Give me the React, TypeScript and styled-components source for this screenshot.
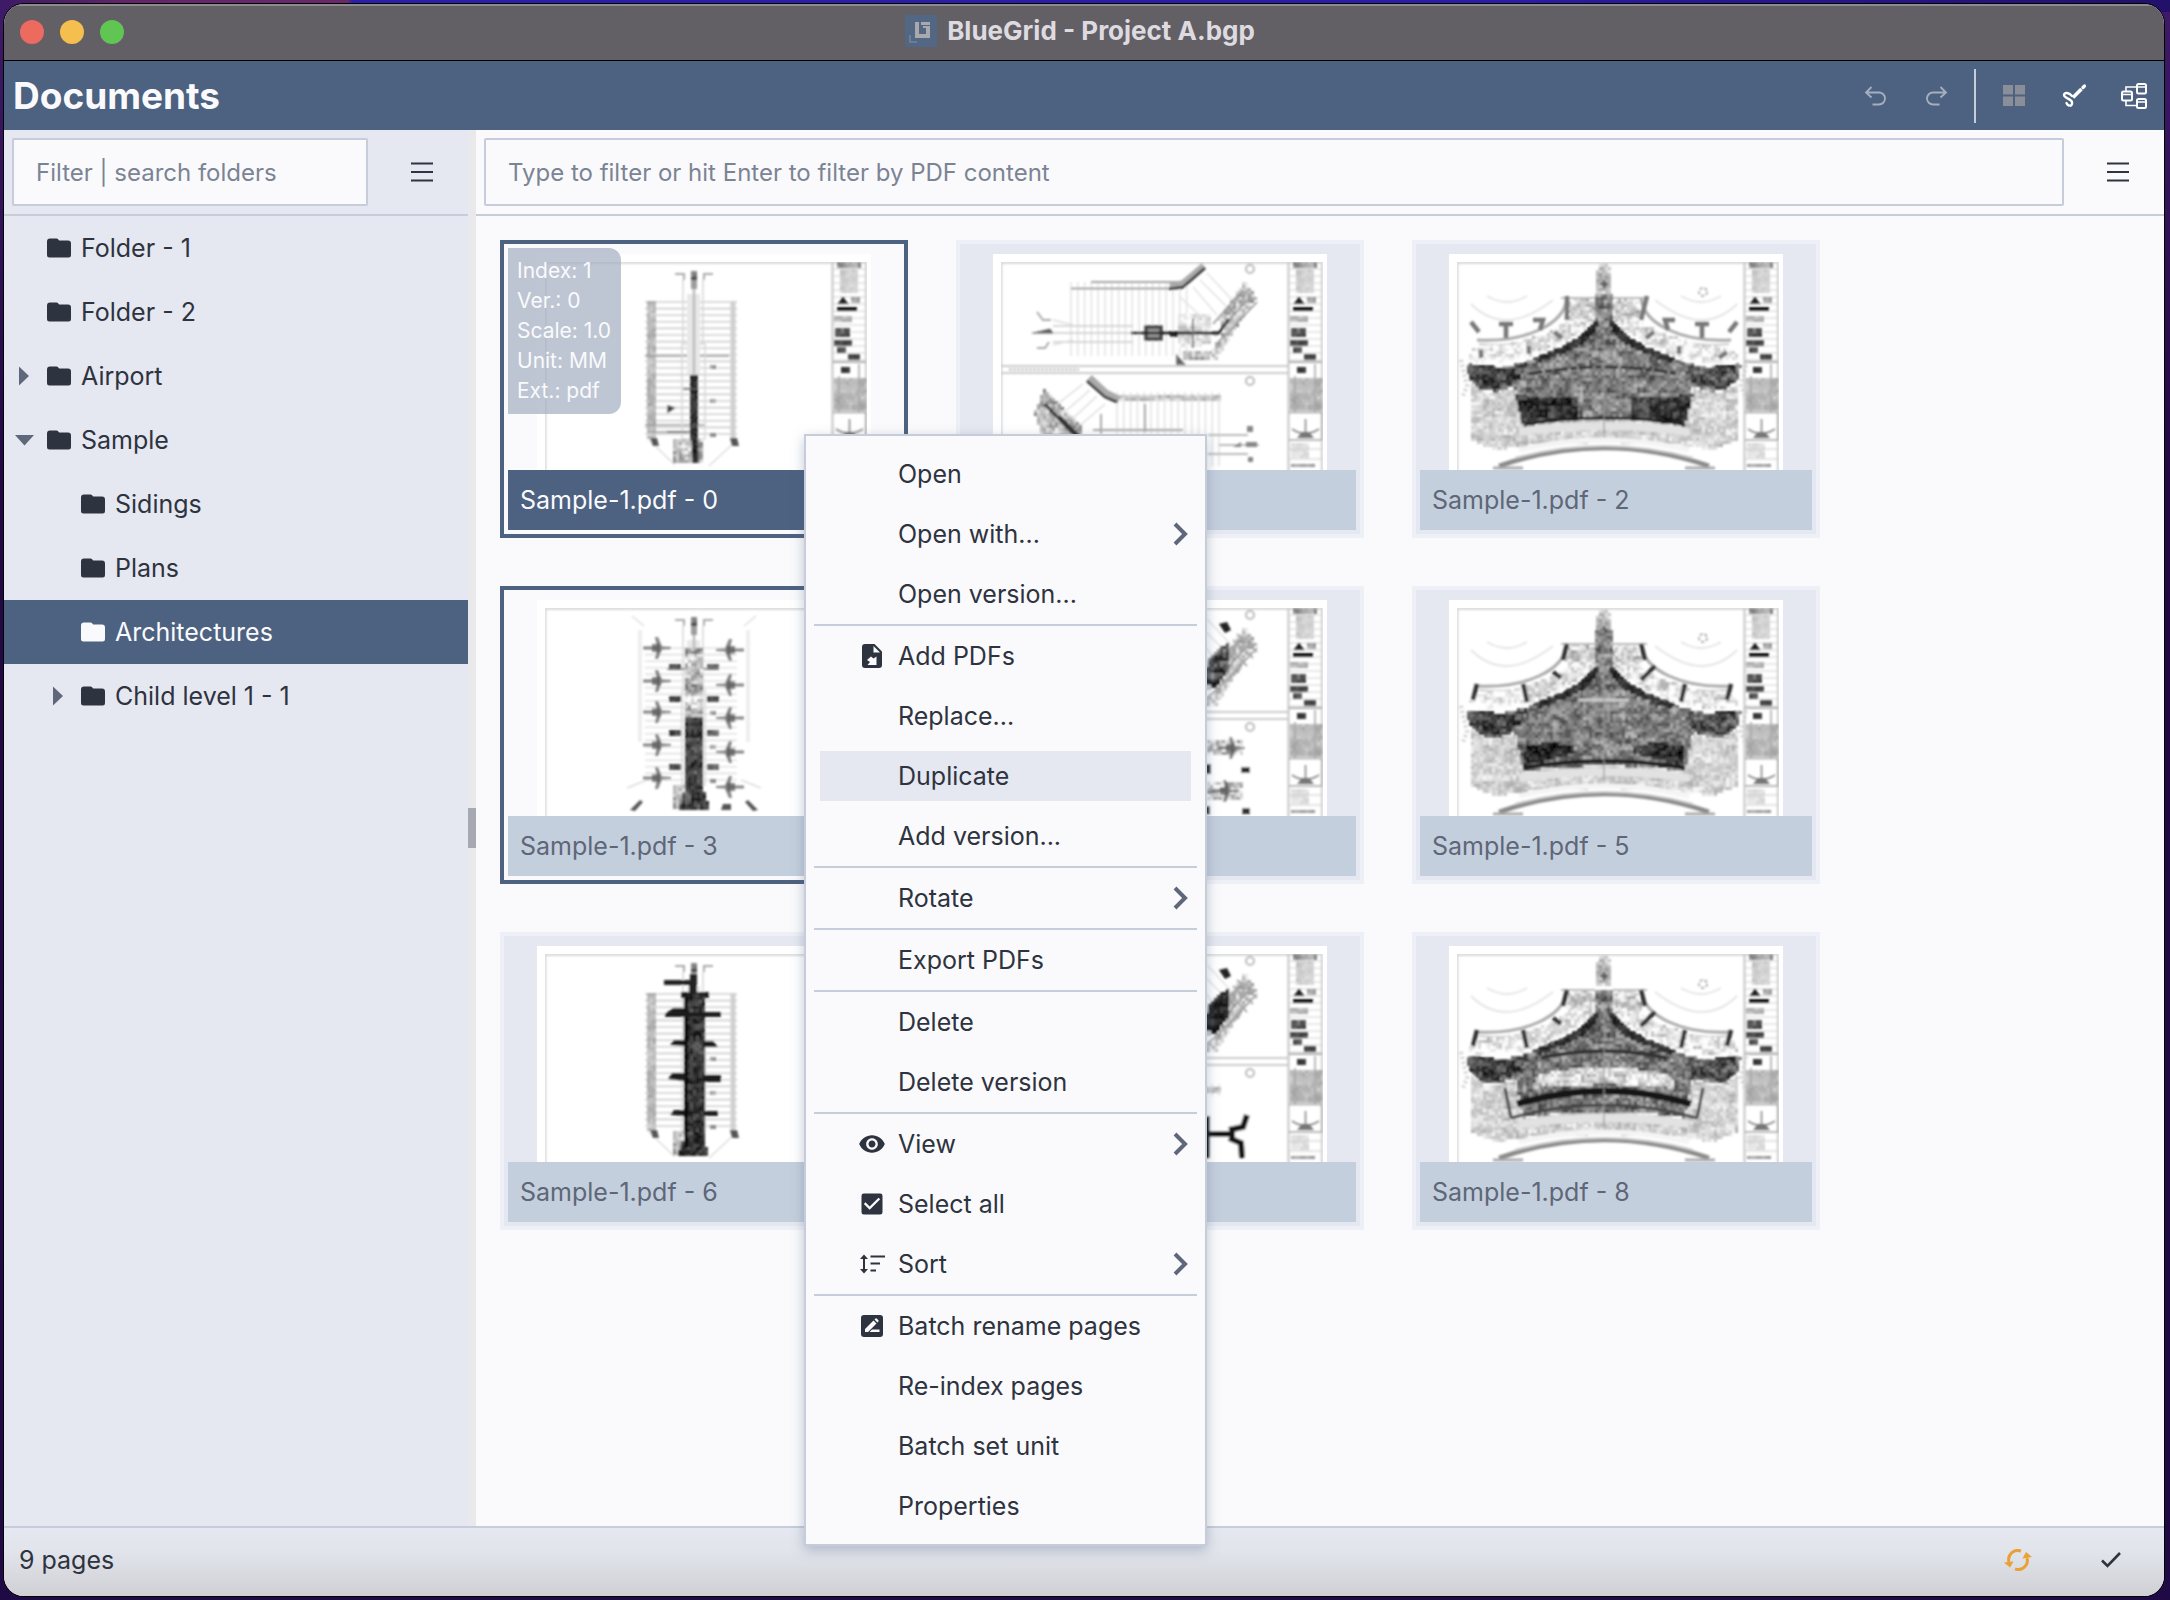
import React from 'react';
import styled, { createGlobalStyle, css } from 'styled-components';
import { MdCheckBox, MdVisibility } from 'react-icons/md';

const c = {
  navy: '#4d6180',
  ink: '#2e3340',
  muted: '#5e6678',
  hint: '#7b8494',
  line: '#c6ccda',
  panel: '#e5e8f0',
  paper: '#fafafc',
  label: '#c4cfdd',
};

const GlobalStyle = createGlobalStyle`
  *, *::before, *::after { box-sizing: border-box; }
  body {
    margin: 0;
    background: #1f0a46;
    color: ${c.ink};
    font-family: Inter, "Liberation Sans", sans-serif;
    font-size: 25px;
    line-height: 32px;
  }
  button, input { font: inherit; color: inherit; }
  button { margin: 0; padding: 0; border: 0; background: none; text-align: left; }
`;

/* ---------- window ---------- */

const Desktop = styled.div`
  min-height: 100vh;
  display: flex;
  padding: 4px 6px 4px 4px;
  background:
    linear-gradient(90deg, #3c1a66 0, #63256a 130px, #6a286a 348px, #2a20a8 352px, #2b1ba6 70%, #22106a 100%) top / 100% 12px no-repeat,
    linear-gradient(180deg, #3f1a68 0, #220845 30%, #1f0a46 100%);
`;

const AppWindow = styled.div`
  flex: 1;
  display: flex;
  flex-direction: column;
  min-width: 0;
  overflow: hidden;
  border-radius: 20px;
  background: ${c.paper};
  box-shadow: 0 0 0 1px #000;
`;

const TitleBar = styled.div`
  display: flex;
  align-items: center;
  height: 57px;
  padding: 0 24px 2px 16px;
  background: #625f65;
  border-top: 2px solid #8d8b8e;
  border-bottom: 1px solid #000;
`;

const Lights = styled.div`
  display: flex;
  flex: 1;
  gap: 16px;
`;

const Light = styled.button<{ $color: string }>`
  width: 24px;
  height: 24px;
  border-radius: 50%;
  background: ${(p) => p.$color};
`;

const Caption = styled.div`
  display: flex;
  align-items: center;
  gap: 10px;
  padding-bottom: 2px;
  color: #dedbe0;
  font-size: 26px;
  font-weight: 700;
`;

const Balance = styled.div`
  flex: 1;
`;

const Header = styled.header`
  display: flex;
  align-items: center;
  height: 69px;
  padding: 0 14px 0 9px;
  background: ${c.navy};
  color: ${c.paper};
`;

const Title = styled.h1`
  flex: 1;
  margin: 0;
  font-size: 37px;
  line-height: 48px;
  font-weight: 700;
`;

const Tools = styled.div`
  display: flex;
  align-items: center;
  gap: 28px;
`;

const Tool = styled.button<{ $dim?: boolean }>`
  display: flex;
  justify-content: center;
  width: 32px;
  opacity: ${(p) => (p.$dim ? 0.65 : 1)};
`;

const ToolDivider = styled.span`
  width: 2px;
  height: 54px;
  margin: 0 -6px;
  background: ${c.line};
`;

const Body = styled.div`
  flex: 1;
  display: flex;
  min-height: 0;
`;

/* ---------- side panel ---------- */

const Side = styled.aside`
  flex: 0 0 464px;
  min-width: 0;
  background: ${c.panel};
`;

const SearchRow = styled.div`
  display: flex;
  align-items: center;
  height: 86px;
  padding-left: 8px;
  border-bottom: 2px solid ${c.line};
`;

const SearchBox = styled.input`
  flex: 1;
  width: 0;
  min-width: 0;
  height: 68px;
  padding: 0 22px;
  border: 2px solid ${c.line};
  border-radius: 2px;
  background: ${c.paper};
  font-size: 24px;
  outline: none;
  &::placeholder { color: ${c.hint}; opacity: 1; }
`;

const ListButton = styled.button`
  display: flex;
  justify-content: center;
  width: 100px;
  padding-left: 8px;
`;

const Tree = styled.ul`
  list-style: none;
  margin: 0;
  padding: 0;
`;

const TreeRow = styled.button<{ $level: number; $active?: boolean }>`
  display: flex;
  align-items: center;
  width: 100%;
  height: 64px;
  padding-left: ${(p) => 11 + p.$level * 34}px;
  ${(p) => p.$active && css`
    background: ${c.navy};
    color: ${c.paper};
  `}
`;

const Twisty = styled.span`
  display: flex;
  width: 32px;
`;

const TreeName = styled.span`
  padding-left: 10px;
`;

const Splitter = styled.div`
  flex: 0 0 8px;
  display: flex;
  align-items: center;
  background: #e9e9ec;
`;

const Grip = styled.span`
  width: 8px;
  height: 40px;
  background: #a6a8b2;
`;

/* ---------- pages ---------- */

const Main = styled.main`
  flex: 1;
  min-width: 0;
`;

const Pages = styled.div`
  display: grid;
  grid-template-columns: repeat(auto-fill, 408px);
  gap: 48px;
  padding: 24px;
`;

const Card = styled.figure<{ $picked?: boolean }>`
  position: relative;
  margin: 0;
  padding: 10px 4px 4px;
  border: 4px solid ${(p) => (p.$picked ? c.navy : '#edf0f6')};
  background: ${(p) => (p.$picked ? c.paper : c.panel)};
`;

const Sheet = styled.svg`
  display: block;
  width: 334px;
  height: 216px;
  margin: 0 auto;
  background: #fff;
`;

const CardLabel = styled.figcaption<{ $current?: boolean }>`
  height: 60px;
  padding: 14px 12px;
  background: ${(p) => (p.$current ? c.navy : c.label)};
  color: ${(p) => (p.$current ? c.paper : c.muted)};
`;

const Info = styled.div`
  position: absolute;
  top: 4px;
  left: 4px;
  padding: 8px 10px 8px 9px;
  border-radius: 0 12px 12px 0;
  background: rgba(162, 174, 194, 0.7);
  color: ${c.paper};
  font-size: 21px;
  line-height: 30px;
`;

/* ---------- context menu ---------- */

const Menu = styled.div`
  position: absolute;
  top: 434px;
  left: 804px;
  width: 403px;
  padding: 8px;
  border: 2px solid ${c.line};
  background: ${c.paper};
  box-shadow: 0 4px 12px rgba(77, 97, 128, 0.35);
`;

const MenuItem = styled.button<{ $active?: boolean }>`
  display: flex;
  align-items: center;
  width: 100%;
  height: 60px;
  padding: 5px 6px;
  & > span {
    flex: 1;
    display: flex;
    align-items: center;
    height: 50px;
    padding: 0 2px 0 38px;
    background: ${(p) => (p.$active ? c.panel : 'transparent')};
  }
`;

const MenuIcon = styled.i`
  display: flex;
  justify-content: center;
  width: 28px;
  margin-right: 12px;
`;

const MenuText = styled.b`
  flex: 1;
  font-weight: 400;
`;

const MenuLine = styled.hr`
  height: 2px;
  margin: 0;
  border: 0;
  background: ${c.line};
`;

/* ---------- status bar ---------- */

const StatusBar = styled.footer`
  display: flex;
  align-items: center;
  height: 70px;
  padding: 0 42px 4px 15px;
  border-top: 2px solid ${c.line};
  background: linear-gradient(180deg, #e5e8f0 0, #e1e4eb 35%, #cfd0d4 100%);
`;

const StatusText = styled.span`
  flex: 1;
`;

const StatusIcons = styled.div`
  display: flex;
  align-items: center;
  gap: 68px;
`;

/* ---------- icons ---------- */

const Logo = () => (
  <svg width="32" height="32" viewBox="0 0 32 32" aria-hidden="true">
    <rect width="32" height="32" fill="#526783" />
    <path d="M10 7h4v12h7v-6h-3v-2h7v12H10zM16 7h9v3h-9z" fill="#a9a9ad" />
    <path d="M5 20v7h7" fill="none" stroke="#75839a" strokeWidth="1.5" />
  </svg>
);

const Undo = ({ flip }: { flip?: boolean }) => (
  <svg width="24" height="24" viewBox="0 0 24 24" fill="none" stroke="#d5dae3" strokeWidth="1.8" aria-hidden="true">
    <g transform={flip ? 'translate(24 0) scale(-1 1)' : undefined}>
      <path d="M7.500 3 2 8.500l5.500 5M2 8.500H15a6 6 0 0 1 0 12H8.500" />
    </g>
  </svg>
);

const Tiles = () => (
  <svg width="24" height="24" viewBox="0 0 24 24" fill="#8a8e98" aria-hidden="true">
    <path d="M1 1h10v9.500H1zM13 1h10v9.500H13zM1 12.500h10V22H1zM13 12.500h10V22H13z" />
  </svg>
);

const Brush = () => (
  <svg width="26" height="26" viewBox="0 0 26 26" fill="none" stroke="#fff" aria-hidden="true">
    <path d="M12 14.500 20.500 6" strokeWidth="3.600" />
    <path d="M22 4.500 23.500 3" strokeWidth="3.200" strokeLinecap="round" />
    <path d="M11 13C8 9.500 3 9 3 12S10.500 16 11 19s-1 4-3 3.500-2-1.500-2.500-2.500" strokeWidth="2.400" strokeLinecap="round" />
  </svg>
);

const Nodes = () => (
  <svg width="28" height="28" viewBox="0 0 28 28" fill="none" stroke="#fff" strokeWidth="2" aria-hidden="true">
    <rect x="2" y="9.500" width="10" height="9" rx="1.500" />
    <rect x="17" y="2" width="9" height="9.500" rx="1.500" />
    <rect x="17" y="17" width="9" height="9" rx="1.500" />
    <path d="M2 12.500h10M17 5h9M17 20h9M6 9.500V5h11M6 18.500v5h11" strokeWidth="1.600" />
  </svg>
);

const Lines = () => (
  <svg width="22" height="20" viewBox="0 0 22 20" fill="none" stroke={c.ink} strokeWidth="2" aria-hidden="true">
    <path d="M0 1.500h22M0 10h22M0 18.500h22" />
  </svg>
);

const Folder = () => (
  <svg width="24" height="20" viewBox="0 0 24 20" fill="currentColor" aria-hidden="true">
    <path d="M3 .5h6.500q1 0 1.600.8l1 1.300H21q3 0 3 3V17q0 2.500-2.500 2.500h-19Q0 19.500 0 17V3.500q0-3 3-3z" />
  </svg>
);

const Arrow = ({ open }: { open?: boolean }) => (
  <svg width="20" height="20" viewBox="0 0 20 20" fill="#5f677b" aria-hidden="true">
    <path d={open ? 'M0 5h19L9.500 15.500z' : 'M4 .5v19L14 10z'} />
  </svg>
);

const Chevron = () => (
  <svg width="16" height="24" viewBox="0 0 16 24" fill="none" stroke="#5f677b" strokeWidth="4" aria-hidden="true">
    <path d="M2 2l10 10L2 22" />
  </svg>
);

const AddFile = () => (
  <svg width="20" height="24" viewBox="0 0 20 24" aria-hidden="true">
    <path d="M3 0h9.500L20 7.500V21q0 3-3 3H3q-3 0-3-3V3q0-3 3-3z" fill={c.ink} />
    <path d="M11.500 2v6.500H18z" fill={c.paper} />
    <path d="M14.500 21V12.500l-3 2-2.500-2-4 3.500 3 2-2.500 3z" fill={c.paper} />
  </svg>
);

const SortLines = () => (
  <svg width="26" height="22" viewBox="0 0 26 22" aria-hidden="true">
    <path d="M5 1.500 9 6H6v10h3l-4 4.500L1 16h3V6H1z" fill={c.ink} />
    <path d="M11.500 3.500H26M11.500 10.500h9.500M11.500 17.500h5.500" stroke={c.ink} strokeWidth="2.200" />
  </svg>
);

const Rename = () => (
  <svg width="22" height="22" viewBox="0 0 22 22" aria-hidden="true">
    <rect width="22" height="22" rx="3" fill={c.ink} />
    <path d="M4 17v-3l8.500-8.500 3 3L7 17zM13.500 4.500l1-1q.6-.5 1.200 0l1.700 1.700q.5.600 0 1.200l-1 1zM11 14.500h7.500V17H8.500z" fill={c.paper} />
  </svg>
);

const Sync = () => (
  <svg width="28" height="22" viewBox="0 0 28 22" fill="none" stroke="#e9a135" strokeWidth="3" aria-hidden="true">
    <path d="M17 2.200A9 9 0 0 0 5 13" />
    <path d="M11 19.800A9 9 0 0 0 23 9" />
    <path d="M0 13.500l9.500-1-3.500 6zM28 8l-9.500 1.500L22 3z" fill="#e9a135" stroke="none" />
  </svg>
);

const Tick = () => (
  <svg width="22" height="18" viewBox="0 0 22 18" fill="none" stroke={c.ink} strokeWidth="2.600" aria-hidden="true">
    <path d="M2 9.500 7.500 15 20 2" />
  </svg>
);

/* ---------- sheet drawings ---------- */

type Pt = [number, number];

const seeded = (seed: number) => () => {
  seed = (seed * 1664525 + 1013904223) % 4294967296;
  return seed / 4294967296;
};

const inside = (x: number, y: number, poly: Pt[]) => {
  let hit = false;
  for (let i = 0, j = poly.length - 1; i < poly.length; j = i++) {
    const [xi, yi] = poly[i];
    const [xj, yj] = poly[j];
    if (yi > y !== yj > y && x < ((xj - xi) * (y - yi)) / (yj - yi) + xi) hit = !hit;
  }
  return hit;
};

/* A slow patchy tone, constant over wide low tiles. */
const patch = (x: number, y: number) => {
  const v = Math.sin(Math.floor(x / 11) * 12.9898 + Math.floor(y / 6) * 78.233) * 43758.5453;
  return v - Math.floor(v);
};

/* Fills an outline with small cells whose greys vary between two bounds. */
const Grain = ({ poly, lo, hi, seed = 7, cell = 3 }: { poly: Pt[]; lo: number; hi: number; seed?: number; cell?: number }) => {
  const rnd = seeded(seed);
  const levels: string[] = Array(7).fill('');
  const xs = poly.map((p) => p[0]);
  const ys = poly.map((p) => p[1]);
  for (let y = Math.min(...ys); y < Math.max(...ys); y += cell) {
    for (let x = Math.min(...xs); x < Math.max(...xs); x += cell) {
      const level = Math.floor((rnd() * 0.55 + patch(x, y) * 0.45) * 7);
      if (inside(x + cell / 2, y + cell / 2, poly)) levels[level] += `M${x} ${y}h${cell}v${cell}h-${cell}z`;
    }
  }
  return (
    <>
      {levels.map((d, i) => {
        const g = Math.round(lo + ((hi - lo) * i) / 6);
        return <path key={i} d={d} fill={`rgb(${g},${g},${g})`} />;
      })}
    </>
  );
};

const box = (x: number, y: number, w: number, h: number): Pt[] => [[x, y], [x + w, y], [x + w, y + h], [x, y + h]];

const flipped = (pts: Pt[]) => pts.map(([x, y]): Pt => [310 - x, y]);

/* Closes a left-hand outline that starts and ends near the centre line. */
const mirror = (pts: Pt[]): Pt[] => [...pts, ...flipped(pts).reverse()];

const Pair = ({ poly, lo, hi, seed = 7 }: { poly: Pt[]; lo: number; hi: number; seed?: number }) => (
  <>
    <Grain poly={poly} lo={lo} hi={hi} seed={seed} />
    <Grain poly={flipped(poly)} lo={lo} hi={hi} seed={seed + 100} />
  </>
);

const steps = (from: number, to: number, by: number) => {
  const out: number[] = [];
  for (let v = from; v <= to; v += by) out.push(v);
  return out;
};

const TitleBlock = () => (
  <g>
    <path d="M8 240V8.500h321V240" fill="none" stroke="#d4d4d4" strokeWidth="2.500" />
    <path d="M295.500 8v232" stroke="#c4c4c4" strokeWidth="2" />
    <Grain poly={box(300, 8, 25, 6)} lo={110} hi={190} seed={3} />
    <Grain poly={box(303, 15, 17, 25)} lo={190} hi={225} seed={4} />
    <path d={steps(15, 110, 7).map((y) => `M296 ${y}h33`).join('')} stroke="#d2d2d2" />
    <path d="M300 50h12l-3-3-2-4h-2l-2 4z" fill="#222" />
    <Grain poly={box(314, 43, 9, 6)} lo={140} hi={210} seed={5} />
    <path d="M300 53h20v4h-20z" fill="#111" />
    <Grain poly={box(297, 62, 18, 6)} lo={160} hi={210} seed={8} />
    <Grain poly={box(298, 74, 15, 9)} lo={50} hi={130} seed={9} />
    <Grain poly={box(297, 86, 18, 6)} lo={40} hi={110} seed={10} />
    <Grain poly={box(300, 93, 9, 6)} lo={50} hi={120} seed={11} />
    <Grain poly={box(311, 100, 12, 6)} lo={50} hi={100} seed={12} />
    <path d="M296 108h33" stroke="#999" strokeWidth="1.500" />
    <Grain poly={box(304, 113, 9, 6)} lo={40} hi={90} seed={13} />
    <Grain poly={box(297, 124, 32, 34)} lo={160} hi={210} seed={14} />
    <path d="M302 122v36M322 110v48M296 158.500h33M296 186h33M329 158v28" stroke="#a5a5a5" strokeWidth="1.500" />
    <path d="M312.500 165v16M299 175q13 9 27 0" stroke="#888" strokeWidth="1.600" fill="none" />
    <path d="M304 184l5-6h7l5 6z" fill="#777" />
    <Grain poly={box(298, 189, 18, 15)} lo={205} hi={235} seed={15} />
    <path d="M296 195h33M296 205h33" stroke="#ccc" />
    <Grain poly={box(298, 210, 24, 3)} lo={140} hi={190} seed={16} />
  </g>
);

const Jet = ({ x, y, flip }: { x: number; y: number; flip?: boolean }) => (
  <g transform={`translate(${x} ${y})${flip ? ' scale(-1 1)' : ''}`} fill="#666">
    <path d="M-12-1.500H2L0-11h3l4 9.500 9 .5v2l-9 .5L3 11H0l2-9.500h-14z" opacity=".8" />
    <path d="M-3-4h8v8h-8z" fill="#555" opacity=".7" />
  </g>
);

const Tower = ({ variant }: { variant: number }) => (
  <g>
    <path d={steps(48, 182, 6.600).map((y) => `M108 ${y}h92`).join('')} stroke={variant === 1 ? '#e2e2e2' : '#cfcfcf'} strokeWidth="1.600" />
    {variant !== 1 && (
      <>
        <Grain poly={box(110, 47, 9, 138)} lo={165} hi={215} seed={21} />
        <path d="M196 47v140" stroke="#d0d0d0" strokeWidth="5" />
        <path d="M112 186l26 25M200 186l-28 26" stroke="#ddd" strokeWidth="1.500" />
        <path d="M113 184h7l2 8h-6zM193 184h7l2 8h-7z" fill="#555" />
      </>
    )}
    {variant === 0 && <path d="M108 102h84M108 171h60M110 178h40" stroke="#999" strokeWidth="1.500" />}
    <path d="M138 20h9v6M176 20h-9v6" stroke="#aaa" strokeWidth="2" fill="none" />
    <path d="M146 25v65M166 25v65M145 90h23v95h-23z" stroke="#d8d8d8" fill="none" strokeWidth="1.500" />
    <path d="M150 40h13v80h-13z" fill="#e8e8e8" />
    <Grain poly={box(154, 17, 6, 18)} lo={70} hi={200} seed={22} />
    <path d="M157 35v85" stroke="#bbb" strokeWidth="2.500" />
    {steps(112, 180, 34).map((y) => <Grain key={y} poly={box(173, y - 1, 6, 4)} lo={120} hi={190} seed={y} cell={2} />)}
    <Grain poly={box(136, 185, 30, 24)} lo={120} hi={250} seed={23} />
    {variant === 0 && (
      <>
        <Grain poly={[[153, 121], [160, 121], [162, 145], [161, 210], [156, 210], [153, 175]]} lo={10} hi={90} seed={24} cell={2} />
        <path d="M146 135h14M130 178h24M131 152l6 2-6 4z" stroke="#666" strokeWidth="1.500" />
      </>
    )}
    {variant === 1 && (
      <>
        <path d="M103 30v112M211 30v112" stroke="#eee" strokeWidth="4" />
        <path d="M95 16l12 10M219 16l-12 10M90 188l20-8M224 188l-20-8" stroke="#ddd" strokeWidth="1.500" />
        {[48, 81, 112, 145, 178].map((y) => <Jet key={y} x={118} y={y} />)}
        {[50, 85, 118, 152, 187].map((y) => <Jet key={y} x={195} y={y} flip />)}
        {[67, 99, 133, 167].map((y) => (
          <g key={y}>
            <Grain poly={box(132, y - 3, 12, 6)} lo={40} hi={120} seed={y} />
            <Grain poly={box(170, y - 3, 12, 6)} lo={60} hi={140} seed={y + 1} />
          </g>
        ))}
        <path d="M130 69h52" stroke="#777" strokeWidth="1.500" />
        <Grain poly={box(148, 48, 18, 69)} lo={110} hi={255} seed={25} />
        <Grain poly={[[147, 117], [165, 117], [167, 190], [173, 211], [142, 211], [147, 190]]} lo={15} hi={120} seed={26} />
        <path d="M93 210l10-10 3 2-8 9zM221 210l-10-10-3 2 8 9zM184 210l2-6h8v6z" fill="#555" />
      </>
    )}
    {variant === 2 && (
      <>
        <path d="M127 34h26v-6h7v18h12v6h-28v-6h8v-7h-25z" fill="#222" />
        <Grain poly={[[147, 48], [167, 48], [167, 190], [172, 210], [141, 210], [147, 190]]} lo={10} hi={100} seed={27} />
        <path d="M149 52v150" stroke="#111" strokeWidth="4" />
        <path d="M128 68l8-6h12v4h36v5h-56zM133 99l4-5h10v6zM166 95h10l5 6h-15zM131 133l4-6h13v8zM166 129h18v7h-18zM133 169l4-5h10v6zM166 165h15v5h-15z" fill="#1c1c1c" />
      </>
    )}
  </g>
);

const Wings = ({ variant }: { variant: number }) => (
  <g>
    <path d={steps(78, 200, 6.800).map((x) => `M${x} 28v74`).join('')} stroke="#e2e2e2" strokeWidth="1.500" />
    <path d="M78 34.500h112M98 28h94" stroke="#888" strokeWidth="1.600" />
    <path d="M177 33l14-4 20-17" stroke="#aaa" strokeWidth="7" fill="none" />
    <path d="M176 35l14-2 22-19" stroke="#333" strokeWidth="2.500" fill="none" />
    <path d="M214 19l28 30M207 26l28 28M200 33l24 28M186 42l30 28" stroke="#e2e2e2" strokeWidth="1.500" />
    <Grain poly={[[252, 25], [263, 44], [222, 108], [216, 100], [232, 76], [226, 66]]} lo={130} hi={255} seed={31} />
    <path d="M264 48l-40 42M258 42l-36 40M250 36l-30 34" stroke="#999" strokeWidth="1.800" />
    <path d="M38 79h100M60 72h80M60 88h80" stroke="#ccc" strokeWidth="1.500" />
    <path d="M40 79h20l-3-4z" stroke="#777" fill="#555" />
    <path d="M44 58l6 8h8M44 94h8l4-6" stroke="#aaa" fill="none" strokeWidth="2" />
    <path d="M60 66l20 5M60 91l20-5" stroke="#ddd" strokeWidth="1.500" />
    <path d="M153 73h15v12h-15z" fill="#999" stroke="#444" strokeWidth="3.500" />
    <path d="M138 79h88l10-14" stroke="#222" strokeWidth="2.500" fill="none" />
    <Grain poly={box(177, 77, 38, 6)} lo={10} hi={70} seed={32} cell={2} />
    <Grain poly={box(185, 60, 33, 33)} lo={190} hi={270} seed={33} />
    <path d="M170 79h56" stroke="#222" strokeWidth="3" />
    <Grain poly={box(190, 97, 27, 8)} lo={140} hi={230} seed={34} />
    <path d="M200 64v30M184 102l7 8h-7z" stroke="#777" strokeWidth="1.800" fill="#555" />
    <path d="M8 112h287M8 119h287" stroke="#ccc" strokeWidth="2" />
    <path d="M16 115.500h70" stroke="#bbb" strokeWidth="2" strokeDasharray="3 1" />
    <path d={steps(124, 230, 6.800).map((x) => `M${x} 138v74`).join('')} stroke="#e2e2e2" strokeWidth="1.500" />
    <Grain poly={box(126, 141, 102, 7)} lo={160} hi={225} seed={35} />
    <path d="M96 124l16 15 14 7" stroke="#aaa" strokeWidth="8" fill="none" />
    <path d="M94 127l18 16 12 5" stroke="#333" strokeWidth="2.500" fill="none" />
    <path d="M90 130l-28 22M97 136l-30 26M104 142l-28 26M112 150l-28 24" stroke="#ddd" strokeWidth="1.500" />
    <Grain poly={[[52, 135], [88, 172], [90, 190], [50, 186], [41, 158]]} lo={120} hi={250} seed={36} />
    <path d="M66 162l20 20M52 150l32 34" stroke="#333" strokeWidth="3" />
    <path d="M152 150v28M100 176h90M108 160v20" stroke="#aaa" strokeWidth="2" />
    <path d="M215 181h40M215 200h40M226 191h40" stroke="#bbb" strokeWidth="1.800" />
    <path d="M240 193l8-5v5zM253 188h11v5h-11zM254 172h6v6h-6zM255 203h5v5h-5z" fill="#888" />
    <circle cx="257" cy="15" r="4" fill="none" stroke="#bbb" strokeWidth="2" />
    <circle cx="257" cy="127" r="4" fill="none" stroke="#bbb" strokeWidth="2" />
    {variant > 0 && (
      <>
        <Grain poly={[[214, 60], [237, 40], [237, 70], [222, 88], [212, 84]]} lo={10} hi={variant === 1 ? 150 : 70} seed={37} />
        <path d="M226 24l8-2 4 8-6 3z" fill="#222" />
        <path d="M240 40l20 18M244 34l20 18M236 48l18 18M214 98l34-30" stroke="#aaa" strokeWidth="2" />
      </>
    )}
    {variant === 1 && (
      <>
        <path d="M212 136h56v76h-56z" fill="#fff" />
        <Grain poly={box(214, 140, 36, 15)} lo={130} hi={280} seed={38} />
        <Grain poly={box(214, 182, 36, 18)} lo={130} hi={280} seed={39} />
        <Jet x={236} y={148} />
        <Jet x={230} y={191} />
        <path d="M248 167h9v6h-9zM249 208h8v6h-8zM212 164h6v10h-6zM212 206h5v8h-5z" fill="#333" />
      </>
    )}
    {variant === 2 && (
      <>
        <path d="M212 150h56v62h-56z" fill="#fff" />
        <path d="M214 188h28M214 170v42M236 184l14-3 4-12M236 192l12 5 1 15" stroke="#161616" strokeWidth="6" fill="none" />
      </>
    )}
  </g>
);

const Arena = ({ variant }: { variant: number }) => {
  const top = [40, 30, 44][variant];
  const body = mirror([[147, top], [145, 68], [134, 82], [116, 92], [98, 98], [80, 107], [50, 114], [20, 110], [20, 124], [32, 136], [48, 138], [66, 132], [74, 172], [112, 167], [154, 166]]);
  const skirt = mirror([[154, 165], [112, 167], [76, 172], [66, 134], [40, 140], [22, 130], [22, 186], [46, 196], [90, 190], [154, 188]]);
  return (
    <g>
      <path d="M22 50q16 16 36 16t46-20M288 50q-16 16-36 16t-46-20M38 42q20 12 40 0M272 42q-20 12-40 0" stroke="#e4e4e4" strokeWidth="1.800" fill="none" />
      <circle cx="254" cy="38" r="4" fill="none" stroke="#999" strokeWidth="1.600" strokeDasharray="3 2" />
      <Grain poly={[[151, 10], [159, 10], [163, 20], [163, 40], [147, 40], [147, 20]]} lo={150} hi={240} seed={41} />
      <path d="M151 30h8M155 26v8" stroke="#555" strokeWidth="2.500" />
      <Pair poly={[[122, 44], [147, 46], [146, 66], [134, 76], [116, 62]]} lo={150} hi={265} seed={42 + variant} />
      <path d="M112 44h34M164 44h34" stroke="#bbb" strokeWidth="2" />
      <path d="M28 86q36 2 62-10t28-32M282 86q-36 2-62-10t-28-32" stroke="#aaa" strokeWidth="3" fill="none" />
      <path d="M30 90q40 4 66-8t28-22M280 90q-40 4-66-8t-28-22" stroke="#ccc" strokeWidth="2" fill="none" />
      <Pair poly={[[24, 94], [60, 90], [100, 78], [124, 64], [138, 74], [112, 90], [80, 104], [40, 110], [20, 106]]} lo={180} hi={285} seed={43 + variant} />
      {variant === 0 ? (
        <path d="M22 68l8 10M50 70h14M57 70v14M84 66h10l-3 10M118 42v24M105 78l8 6M80 92v8M32 96v8M288 68l-8 10M260 70h-14M253 70v14M226 66h-10l3 10M198 42l-6 24M205 78l-8 6M230 92v8M278 98l-8 6" stroke="#777" strokeWidth="4.500" fill="none" />
      ) : (
        <path d="M28 84l-4 16M74 84l4 18M118 44l-4 16M104 72l8 6M282 84l-4 16M236 84l-4 18M192 44l4 16M206 66l-14 14" stroke="#333" strokeWidth="4.500" fill="none" />
      )}
      <Grain poly={skirt} lo={175} hi={245} seed={44 + variant} />
      <Grain poly={body} lo={variant === 2 ? 60 : 70} hi={185} seed={45 + variant} />
      <Pair poly={[[147, 64], [134, 80], [112, 93], [84, 104], [88, 109], [116, 99], [140, 86], [150, 72]]} lo={10} hi={80} seed={46} />
      <Pair poly={[[18, 110], [60, 114], [80, 108], [72, 124], [60, 132], [34, 136], [20, 124]]} lo={10} hi={140} seed={47} />
      {variant === 0 && (
        <>
          <path d="M80 120q75-14 150 0" stroke="#333" strokeWidth="3" strokeDasharray="14 3 6 2" fill="none" />
          <Pair poly={[[66, 140], [100, 144], [128, 142], [128, 166], [100, 168], [74, 172]]} lo={0} hi={110} seed={48} />
          <path d="M76 170q79-12 158 0" stroke="#222" strokeWidth="3" fill="none" />
        </>
      )}
      {variant === 1 && (
        <>
          <Pair poly={[[76, 146], [100, 142], [126, 146], [126, 154], [92, 162], [74, 168]]} lo={0} hi={100} seed={49} />
          <path d="M74 168q81-14 162 0" stroke="#1c1c1c" strokeWidth="4" fill="none" />
          <path d="M130 100h50" stroke="#ccc" strokeWidth="3" />
        </>
      )}
      {variant === 2 && (
        <>
          <Grain poly={mirror([[154, 122], [110, 124], [88, 130], [84, 142], [110, 140], [154, 138]])} lo={160} hi={275} seed={50} />
          <path d="M68 158q87-26 174 0" stroke="#161616" strokeWidth="7" fill="none" />
          <path d="M62 172q93-26 186 0M56 142l6 30M254 142l-6 30" stroke="#444" strokeWidth="3" fill="none" />
          <path d="M92 112q63-14 126 0" stroke="#333" strokeWidth="4" fill="none" />
        </>
      )}
      <path d="M70 178q85-12 170 0" stroke="#e2e2e2" strokeWidth="8" fill="none" />
      <path d="M70 196q85-20 170 0" stroke="#f4f4f4" strokeWidth="5" fill="none" />
      <path d="M50 212q105-36 210 0" stroke="#8a8a8a" strokeWidth="4.500" fill="none" />
      <path d="M66 204q89-24 178 0" stroke="#ccc" strokeWidth="2" fill="none" />
      <path d="M44 214h30M236 214h30" stroke="#aaa" strokeWidth="3" />
      <path d="M12 106l6 26-4 10M298 106l-6 26 4 10" stroke="#ccc" strokeWidth="4" strokeDasharray="2 3" fill="none" />
      <path d="M155 60v120" stroke="#999" strokeWidth="1.200" />
    </g>
  );
};

const Drawing = ({ index }: { index: number }) => {
  const variant = Math.floor(index / 3);
  const kind = index % 3;
  return (
    <Sheet viewBox="0 0 334 216" role="img" aria-label={`Sheet ${index + 1}`}>
      <defs>
        <filter id={`soft${index}`} x="0" y="0" width="1" height="1">
          <feGaussianBlur stdDeviation="0.9" />
        </filter>
      </defs>
      <g filter={`url(#soft${index})`}>
        <TitleBlock />
        {kind === 0 && <Tower variant={variant} />}
        {kind === 1 && <Wings variant={variant} />}
        {kind === 2 && <Arena variant={variant} />}
      </g>
    </Sheet>
  );
};

/* ---------- data ---------- */

const folders: { name: string; level: number; arrow?: 'open' | 'closed'; active?: boolean }[] = [
  { name: 'Folder - 1', level: 0 },
  { name: 'Folder - 2', level: 0 },
  { name: 'Airport', level: 0, arrow: 'closed' },
  { name: 'Sample', level: 0, arrow: 'open' },
  { name: 'Sidings', level: 1 },
  { name: 'Plans', level: 1 },
  { name: 'Architectures', level: 1, active: true },
  { name: 'Child level 1 - 1', level: 1, arrow: 'closed' },
];

const info = ['Index: 1', 'Ver.: 0', 'Scale: 1.0', 'Unit: MM', 'Ext.: pdf'];

type Entry = { text: string; icon?: React.ReactNode; more?: boolean; active?: boolean };

const menu: Entry[][] = [
  [{ text: 'Open' }, { text: 'Open with...', more: true }, { text: 'Open version...' }],
  [
    { text: 'Add PDFs', icon: <AddFile /> },
    { text: 'Replace...' },
    { text: 'Duplicate', active: true },
    { text: 'Add version...' },
  ],
  [{ text: 'Rotate', more: true }],
  [{ text: 'Export PDFs' }],
  [{ text: 'Delete' }, { text: 'Delete version' }],
  [
    { text: 'View', icon: <MdVisibility size={28} />, more: true },
    { text: 'Select all', icon: <MdCheckBox size={28} /> },
    { text: 'Sort', icon: <SortLines />, more: true },
  ],
  [
    { text: 'Batch rename pages', icon: <Rename /> },
    { text: 'Re-index pages' },
    { text: 'Batch set unit' },
    { text: 'Properties' },
  ],
];

export default function App() {
  return (
    <>
      <GlobalStyle />
      <Desktop>
        <AppWindow>
          <TitleBar>
            <Lights>
              <Light $color="#ed6a5e" aria-label="Close" />
              <Light $color="#f5bf4f" aria-label="Minimise" />
              <Light $color="#61c554" aria-label="Zoom" />
            </Lights>
            <Caption><Logo />BlueGrid - Project A.bgp</Caption>
            <Balance />
          </TitleBar>
          <Header>
            <Title>Documents</Title>
            <Tools>
              <Tool $dim aria-label="Undo"><Undo /></Tool>
              <Tool $dim aria-label="Redo"><Undo flip /></Tool>
              <ToolDivider />
              <Tool aria-label="Tiles"><Tiles /></Tool>
              <Tool aria-label="Markup"><Brush /></Tool>
              <Tool aria-label="Structure"><Nodes /></Tool>
            </Tools>
          </Header>
          <Body>
            <Side>
              <SearchRow>
                <SearchBox type="text" aria-label="Filter folders" placeholder="Filter | search folders" />
                <ListButton aria-label="Folder options"><Lines /></ListButton>
              </SearchRow>
              <Tree>
                {folders.map((f) => (
                  <li key={f.name}>
                    <TreeRow $level={f.level} $active={f.active}>
                      <Twisty>{f.arrow && <Arrow open={f.arrow === 'open'} />}</Twisty>
                      <Folder />
                      <TreeName>{f.name}</TreeName>
                    </TreeRow>
                  </li>
                ))}
              </Tree>
            </Side>
            <Splitter><Grip /></Splitter>
            <Main>
              <SearchRow>
                <SearchBox type="text" aria-label="Filter pages" placeholder="Type to filter or hit Enter to filter by PDF content" />
                <ListButton aria-label="Page options"><Lines /></ListButton>
              </SearchRow>
              <Pages>
                {steps(0, 8, 1).map((i) => (
                  <Card key={i} $picked={i === 0 || i === 3}>
                    <Drawing index={i} />
                    <CardLabel $current={i === 0}>Sample-1.pdf - {i}</CardLabel>
                    {i === 0 && <Info>{info.map((line) => <div key={line}>{line}</div>)}</Info>}
                  </Card>
                ))}
              </Pages>
            </Main>
          </Body>
          <StatusBar>
            <StatusText>9 pages</StatusText>
            <StatusIcons><Sync /><Tick /></StatusIcons>
          </StatusBar>
        </AppWindow>
      </Desktop>
      <Menu role="menu">
        {menu.map((group, g) => (
          <React.Fragment key={g}>
            {g > 0 && <MenuLine />}
            {group.map((item) => (
              <MenuItem key={item.text} role="menuitem" $active={item.active}>
                <span>
                  <MenuIcon>{item.icon}</MenuIcon>
                  <MenuText>{item.text}</MenuText>
                  {item.more && <Chevron />}
                </span>
              </MenuItem>
            ))}
          </React.Fragment>
        ))}
      </Menu>
    </>
  );
}
